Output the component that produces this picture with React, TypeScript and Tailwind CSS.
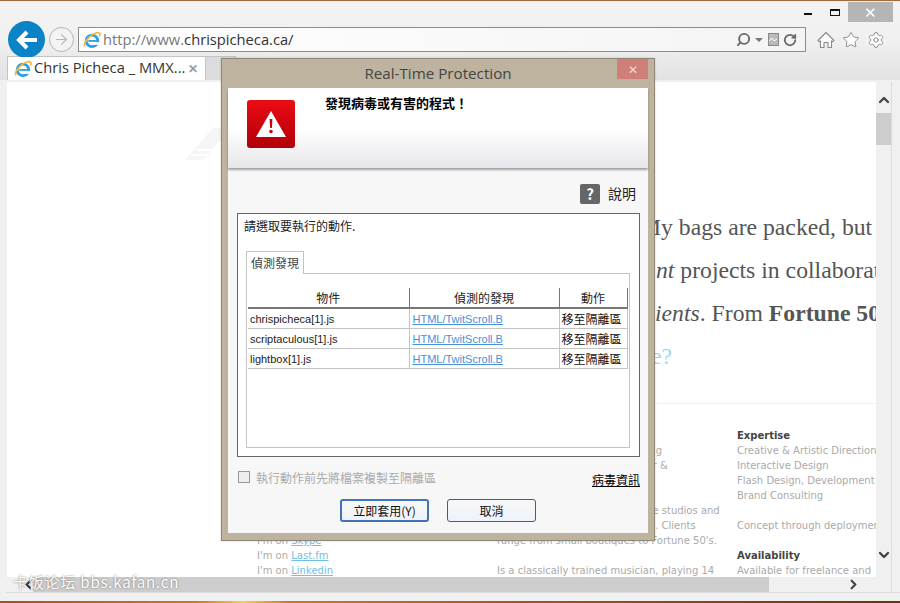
import { Search, RotateCw, Star, Settings, ArrowRight, ChevronUp, ChevronDown, ChevronLeft, ChevronRight } from "lucide-react";

const cjk = "font-['Noto_Sans_CJK_TC','Noto_Sans',sans-serif]";
const ui = "font-['Open_Sans','Noto_Sans_CJK_TC',sans-serif]";
const cell = "font-['Liberation_Sans',sans-serif] text-[11px]";

const rows = ["chrispicheca[1].js", "scriptaculous[1].js", "lightbox[1].js"];

function IeIcon({ size = 18 }: { size?: number }) {
    return (
        <svg width={size} height={size} viewBox="0 0 20 20" className="shrink-0">
            <circle cx="10" cy="11" r="6.4" fill="none" stroke="#2f9ee0" strokeWidth="3.2" />
            <rect x="6" y="10" width="9" height="2" fill="#2f9ee0" />
            <rect x="12" y="12.4" width="7" height="3" fill="#fff" />
            <path d="M2 17 C0 13 8 4 15 2 C18 1 20 3 18 6" fill="none" stroke="#f2b632" strokeWidth="1.9" />
        </svg>
    );
}

function Toolbar() {
    return (
        <div className="relative h-[79px] shrink-0 bg-gradient-to-b from-[#f3f3f3] via-[#f0f0f0] to-[#e2e2e2]">
            <div className="flex h-[26px] items-start justify-end pr-[7px]">
                <div className="mt-[12px] h-[2px] w-[8px] bg-[#111]" />
                <div className="ml-[18px] mt-[8px] h-[7px] w-[10px] border border-t-2 border-[#111]" />
                <div className="ml-[8px] mt-[1px] flex h-[20px] w-[45px] items-center justify-center bg-[#b5b5b5] text-[15px] leading-none text-white">✕</div>
            </div>
            <div className="flex h-[25px] items-center">
                <div className="ml-[8px] flex h-[37px] w-[37px] shrink-0 items-center justify-center rounded-full bg-[#0a84c6]">
                    <svg width="24" height="22" viewBox="0 0 24 22">
                        <path d="M22 11H5M12 3l-8 8 8 8" fill="none" stroke="#fff" strokeWidth="4" />
                    </svg>
                </div>
                <div className="ml-[4px] flex h-[25px] w-[25px] shrink-0 items-center justify-center rounded-full border border-[#b5b5b5] bg-[#f3f3f3] text-[#b5b5b5]">
                    <ArrowRight size={17} strokeWidth={1.5} />
                </div>
                <div className="ml-[4px] flex h-[25px] w-[728px] shrink-0 items-center border border-[#8c8c8c] bg-gradient-to-r from-white to-[#f4f4f4] pl-[4px] pr-[8px]">
                    <IeIcon />
                    <span className={`${ui} ml-[2px] text-[14.7px] text-[#787878]`}>
                        http://www.<span className="text-[#333]">chrispicheca.ca/</span>
                    </span>
                    <div className="ml-auto flex items-center text-[#666]">
                        <Search size={15} strokeWidth={3} className="-scale-x-100" />
                        <div className="ml-[4px] h-0 w-0 border-x-[4px] border-t-[4px] border-x-transparent border-t-[#777]" />
                        <svg width="11" height="13" viewBox="0 0 11 13" className="ml-[5px]">
                            <rect x="0.5" y="0.5" width="10" height="12" fill="#bbb" stroke="#888" />
                            <path d="M1 8l3-3 2 3 3-2" fill="none" stroke="#fff" />
                        </svg>
                        <RotateCw size={14} strokeWidth={3} className="ml-[4px]" />
                    </div>
                </div>
                <div className="ml-[11px] flex items-center gap-[7px] text-[#8a8a8a]">
                    <svg width="18" height="18" viewBox="0 0 18 18" fill="#fff" stroke="currentColor" strokeWidth="1.1" strokeLinejoin="round">
                        <path d="M1 9.500L9 1.500l8 8-1.500 1.200L14.500 9.800V16.500h-3.500v-5H7v5H3.500V9.800l-1 .9z" />
                    </svg>
                    <Star size={18} strokeWidth={1.3} fill="#fff" />
                    <Settings size={18} strokeWidth={1.3} fill="#fff" />
                </div>
            </div>
            <div className="ml-[7px] mt-[4px] flex h-[24px] w-[229px] items-end border-t border-r border-[#c4c4c4] bg-[#dcdcdc]">
                <div className="flex h-[23px] w-[199px] items-center border-x border-[#c4c4c4] bg-white pl-[6px]">
                    <IeIcon />
                    <span className={`${ui} -mt-[2px] ml-[2px] whitespace-nowrap text-[14.7px] text-[#333]`}>Chris Picheca _ MMX...</span>
                    <span className="ml-[3px] text-[12px] font-bold text-[#999]">✕</span>
                </div>
            </div>
        </div>
    );
}

function PageBehind() {
    const small = "font-['DejaVu_Sans',sans-serif] text-[10px] leading-[15px] text-[#aaa] whitespace-nowrap";
    return (
        <div className="relative min-w-0 flex-1 overflow-hidden bg-white">
            <div className="pl-[633px] pt-[124px] font-['Liberation_Serif',serif] text-[23.7px] leading-[43px] text-[#555] whitespace-nowrap">
                <div>My bags are packed, but</div>
                <div className="ml-[16px]"><i>nt</i> projects in collaboration</div>
                <div className="ml-[15px]"><i>ients</i>. From <b>Fortune 500</b></div>
                <div className="ml-[11px] text-[#a5d5f0]">e?</div>
            </div>
            <div className="mt-[25px] ml-[648px] h-px bg-[#f0f0f0]" />
            <div className={`${small} mt-[24px] grid grid-cols-[240px_240px_240px] pl-[250px]`}>
                <div className="pt-[105px]">
                    <div>I'm on <span className="text-[#6cc0ea] underline">Skype</span></div>
                    <div>I'm on <span className="text-[#6cc0ea] underline">Last.fm</span></div>
                    <div>I'm on <span className="text-[#6cc0ea] underline">Linkedin</span></div>
                </div>
                <div className="pt-[15px]">
                    <div>Senior designer and art directing</div>
                    <div>a freelance interaction designer &amp;</div>
                    <div className="h-[30px]" />
                    <div>Works for ad agencies, boutique studios and</div>
                    <div>small and bigger agencies alike. Clients</div>
                    <div>range from small boutiques to Fortune 50's.</div>
                    <div className="h-[15px]" />
                    <div>Is a classically trained musician, playing 14</div>
                </div>
                <div>
                    <div className="font-bold text-[#444]">Expertise</div>
                    <div>Creative &amp; Artistic Direction</div>
                    <div>Interactive Design</div>
                    <div>Flash Design, Development</div>
                    <div>Brand Consulting</div>
                    <div className="h-[15px]" />
                    <div>Concept through deployment</div>
                    <div className="h-[15px]" />
                    <div className="font-bold text-[#444]">Availability</div>
                    <div>Available for freelance and</div>
                </div>
            </div>
            <svg width="46" height="32" viewBox="0 0 46 32" className="absolute left-[178px] top-[46px]">
                <path d="M0 32L28 0h18L18 32z" fill="#f6f6f6" />
                <path d="M12 22h30M6 27h30" stroke="#fff" strokeWidth="2" />
            </svg>
        </div>
    );
}

function Dialog() {
    return (
        <div className={`${cjk} absolute left-[221px] top-[58px] flex h-[483px] w-[434px] flex-col border border-[#8f8778] bg-[#bdb39f] px-[6px] pb-[7px] shadow-[0_0_2px_rgba(0,0,0,0.2)]`}>
            <div className="relative h-[29px] shrink-0 text-center">
                <span className={`${ui} text-[15.2px] leading-[29px] text-[#444]`}>Real-Time Protection</span>
                <div className="absolute right-0 top-0 flex h-[20px] w-[31px] items-center justify-center bg-[#cf7f78] text-[12px] text-[#f3dcda]">✕</div>
            </div>
            <div className="flex min-h-0 flex-1 flex-col bg-[#f7f7f7]">
                <div className="flex h-[80px] shrink-0 bg-gradient-to-b from-white via-white to-[#e6e6ea] pl-[19px] pt-[12px] shadow-[0_2px_2px_rgba(0,0,0,0.35)]">
                    <div className="flex h-[48px] w-[48px] items-center justify-center rounded-[3px] bg-gradient-to-b from-[#ec0c14] to-[#b00008]">
                        <svg width="30" height="26" viewBox="0 0 30 26">
                            <path d="M15 0L30 26H0z" fill="#fff" />
                            <path d="M13.6 8h2.8l-.5 9h-1.800z" fill="#c8000a" />
                            <circle cx="15" cy="20.500" r="1.800" fill="#c8000a" />
                        </svg>
                    </div>
                    <div className="-mt-[5px] ml-[30px] text-[13px] font-bold leading-[15px] text-black">發現病毒或有害的程式！</div>
                </div>
                <div className="flex h-[45px] shrink-0 items-center justify-end pr-[12px] pt-[6px]">
                    <div className="flex h-[20px] w-[20px] items-center justify-center rounded-[2px] bg-[#666] text-[15px] font-bold leading-none text-white">?</div>
                    <span className="ml-[8px] text-[14px] text-[#222]">說明</span>
                </div>
                <div className="ml-[9px] mr-[8px] flex h-[244px] shrink-0 flex-col border border-[#666] bg-white px-[6px] pt-[3px]">
                    <div className="text-[12px] leading-[18px] text-[#222]">請選取要執行的動作.</div>
                    <div className="relative z-10 -mb-px ml-[2px] mt-[16px] flex h-[23px] w-[58px] items-center justify-center border border-b-0 border-[#c4c4c4] bg-white text-[12px] text-[#444]">偵測發現</div>
                    <div className="ml-[2px] mr-[3px] h-[175px] border border-[#c4c4c4] px-[1px] pt-[14px]">
                        <table className="w-[379px] table-fixed border-collapse">
                            <colgroup>
                                <col className="w-[161px]" />
                                <col className="w-[150px]" />
                                <col className="w-[68px]" />
                            </colgroup>
                            <thead>
                                <tr className="h-[20px] border-b-2 border-[#777] text-[12px] text-[#222]">
                                    <th className="border-r border-[#777] p-0 font-normal">物件</th>
                                    <th className="border-r border-[#777] p-0 font-normal">偵測的發現</th>
                                    <th className="border-r border-[#777] p-0 font-normal">動作</th>
                                </tr>
                            </thead>
                            <tbody>
                                {rows.map((name) => (
                                    <tr key={name} className="h-[20px] border-b border-[#c4c4c4]">
                                        <td className={`${cell} border-r border-[#c4c4c4] p-0 pl-[2px] pt-[1px] text-[#222]`}>{name}</td>
                                        <td className={`${cell} border-r border-[#c4c4c4] p-0 pl-[3px] pt-[1px] text-[#4a90d9] underline`}>HTML/TwitScroll.B</td>
                                        <td className="border-r border-[#c4c4c4] p-0 pl-[2px] pt-[1px] text-[12px] text-[#111]">移至隔離區</td>
                                    </tr>
                                ))}
                            </tbody>
                        </table>
                    </div>
                </div>
                <div className="ml-[10px] mr-[9px] mt-[14px] flex h-[22px] shrink-0 items-start">
                    <div className="h-[12px] w-[12px] border border-[#999] bg-[#eee]" />
                    <span className="ml-[6px] text-[12px] leading-[14px] text-[#aaa]">執行動作前先將檔案複製至隔離區</span>
                    <span className="ml-auto mr-[-1px] mt-[2px] text-[12px] leading-[14px] text-black underline">病毒資訊</span>
                </div>
                <div className="mt-[6px] flex justify-center gap-[18px]">
                    <div className="flex h-[23px] w-[89px] items-center justify-center rounded-[3px] border-2 border-[#3f74b8] bg-gradient-to-b from-[#f8f8f8] to-[#eef3fa] text-[12px] text-[#111]">立即套用(Y)</div>
                    <div className="flex h-[23px] w-[89px] items-center justify-center rounded-[3px] border border-[#3a5f8a] bg-gradient-to-b from-[#f8f8f8] to-[#eef3fa] text-[12px] text-[#111]">取消</div>
                </div>
            </div>
        </div>
    );
}

export default function App() {
    return (
        <div className="relative flex h-[603px] w-[900px] flex-col overflow-hidden bg-[#f0f0f0]">
            <div className="h-px shrink-0 bg-[#a8693a]" />
            <Toolbar />
            <div className="ml-[6px] flex min-h-0 flex-1 border-b border-[#dcdcdc] pl-[7px] pr-[8px] pt-[2px]">
                <div className="-ml-[6px] flex min-w-0 flex-1 flex-col">
                    <PageBehind />
                    <div className="flex h-[15px] shrink-0 items-center bg-[#f0f0f0]">
                        <div className="relative h-full w-[26px]">
                            <ChevronLeft size={15} strokeWidth={3.5} className="absolute left-[14px] top-0 text-[#333]" />
                        </div>
                        <div className="h-full w-[736px] bg-[#cdcdcd]" />
                        <ChevronRight size={15} strokeWidth={3.5} className="ml-[77px] text-[#444]" />
                    </div>
                </div>
                <div className="flex w-[16px] shrink-0 flex-col items-center border-r border-[#dcdcdc] bg-[#f0f0f0]">
                    <ChevronUp size={16} strokeWidth={3.5} className="mt-[10px] text-[#444]" />
                    <div className="mt-[5px] h-[32px] w-[15px] bg-[#cdcdcd]" />
                    <ChevronDown size={16} strokeWidth={3.5} className="mt-[402px] text-[#444]" />
                </div>
            </div>
            <div className="mt-[8px] h-[2px] shrink-0 bg-[linear-gradient(to_right,#a8501a_0%,#d8741e_22%,#ffd040_27%,#d8741e_32%,#a8501a_60%,#6a3410_100%)]" />
            <Dialog />
            <div className="absolute left-[13px] top-[571px] font-['Noto_Sans_CJK_SC','DejaVu_Sans',sans-serif] text-[15px] tracking-[0.8px] text-white [text-shadow:0_0_2px_#666]">卡饭论坛 bbs.kafan.cn</div>
        </div>
    );
}
